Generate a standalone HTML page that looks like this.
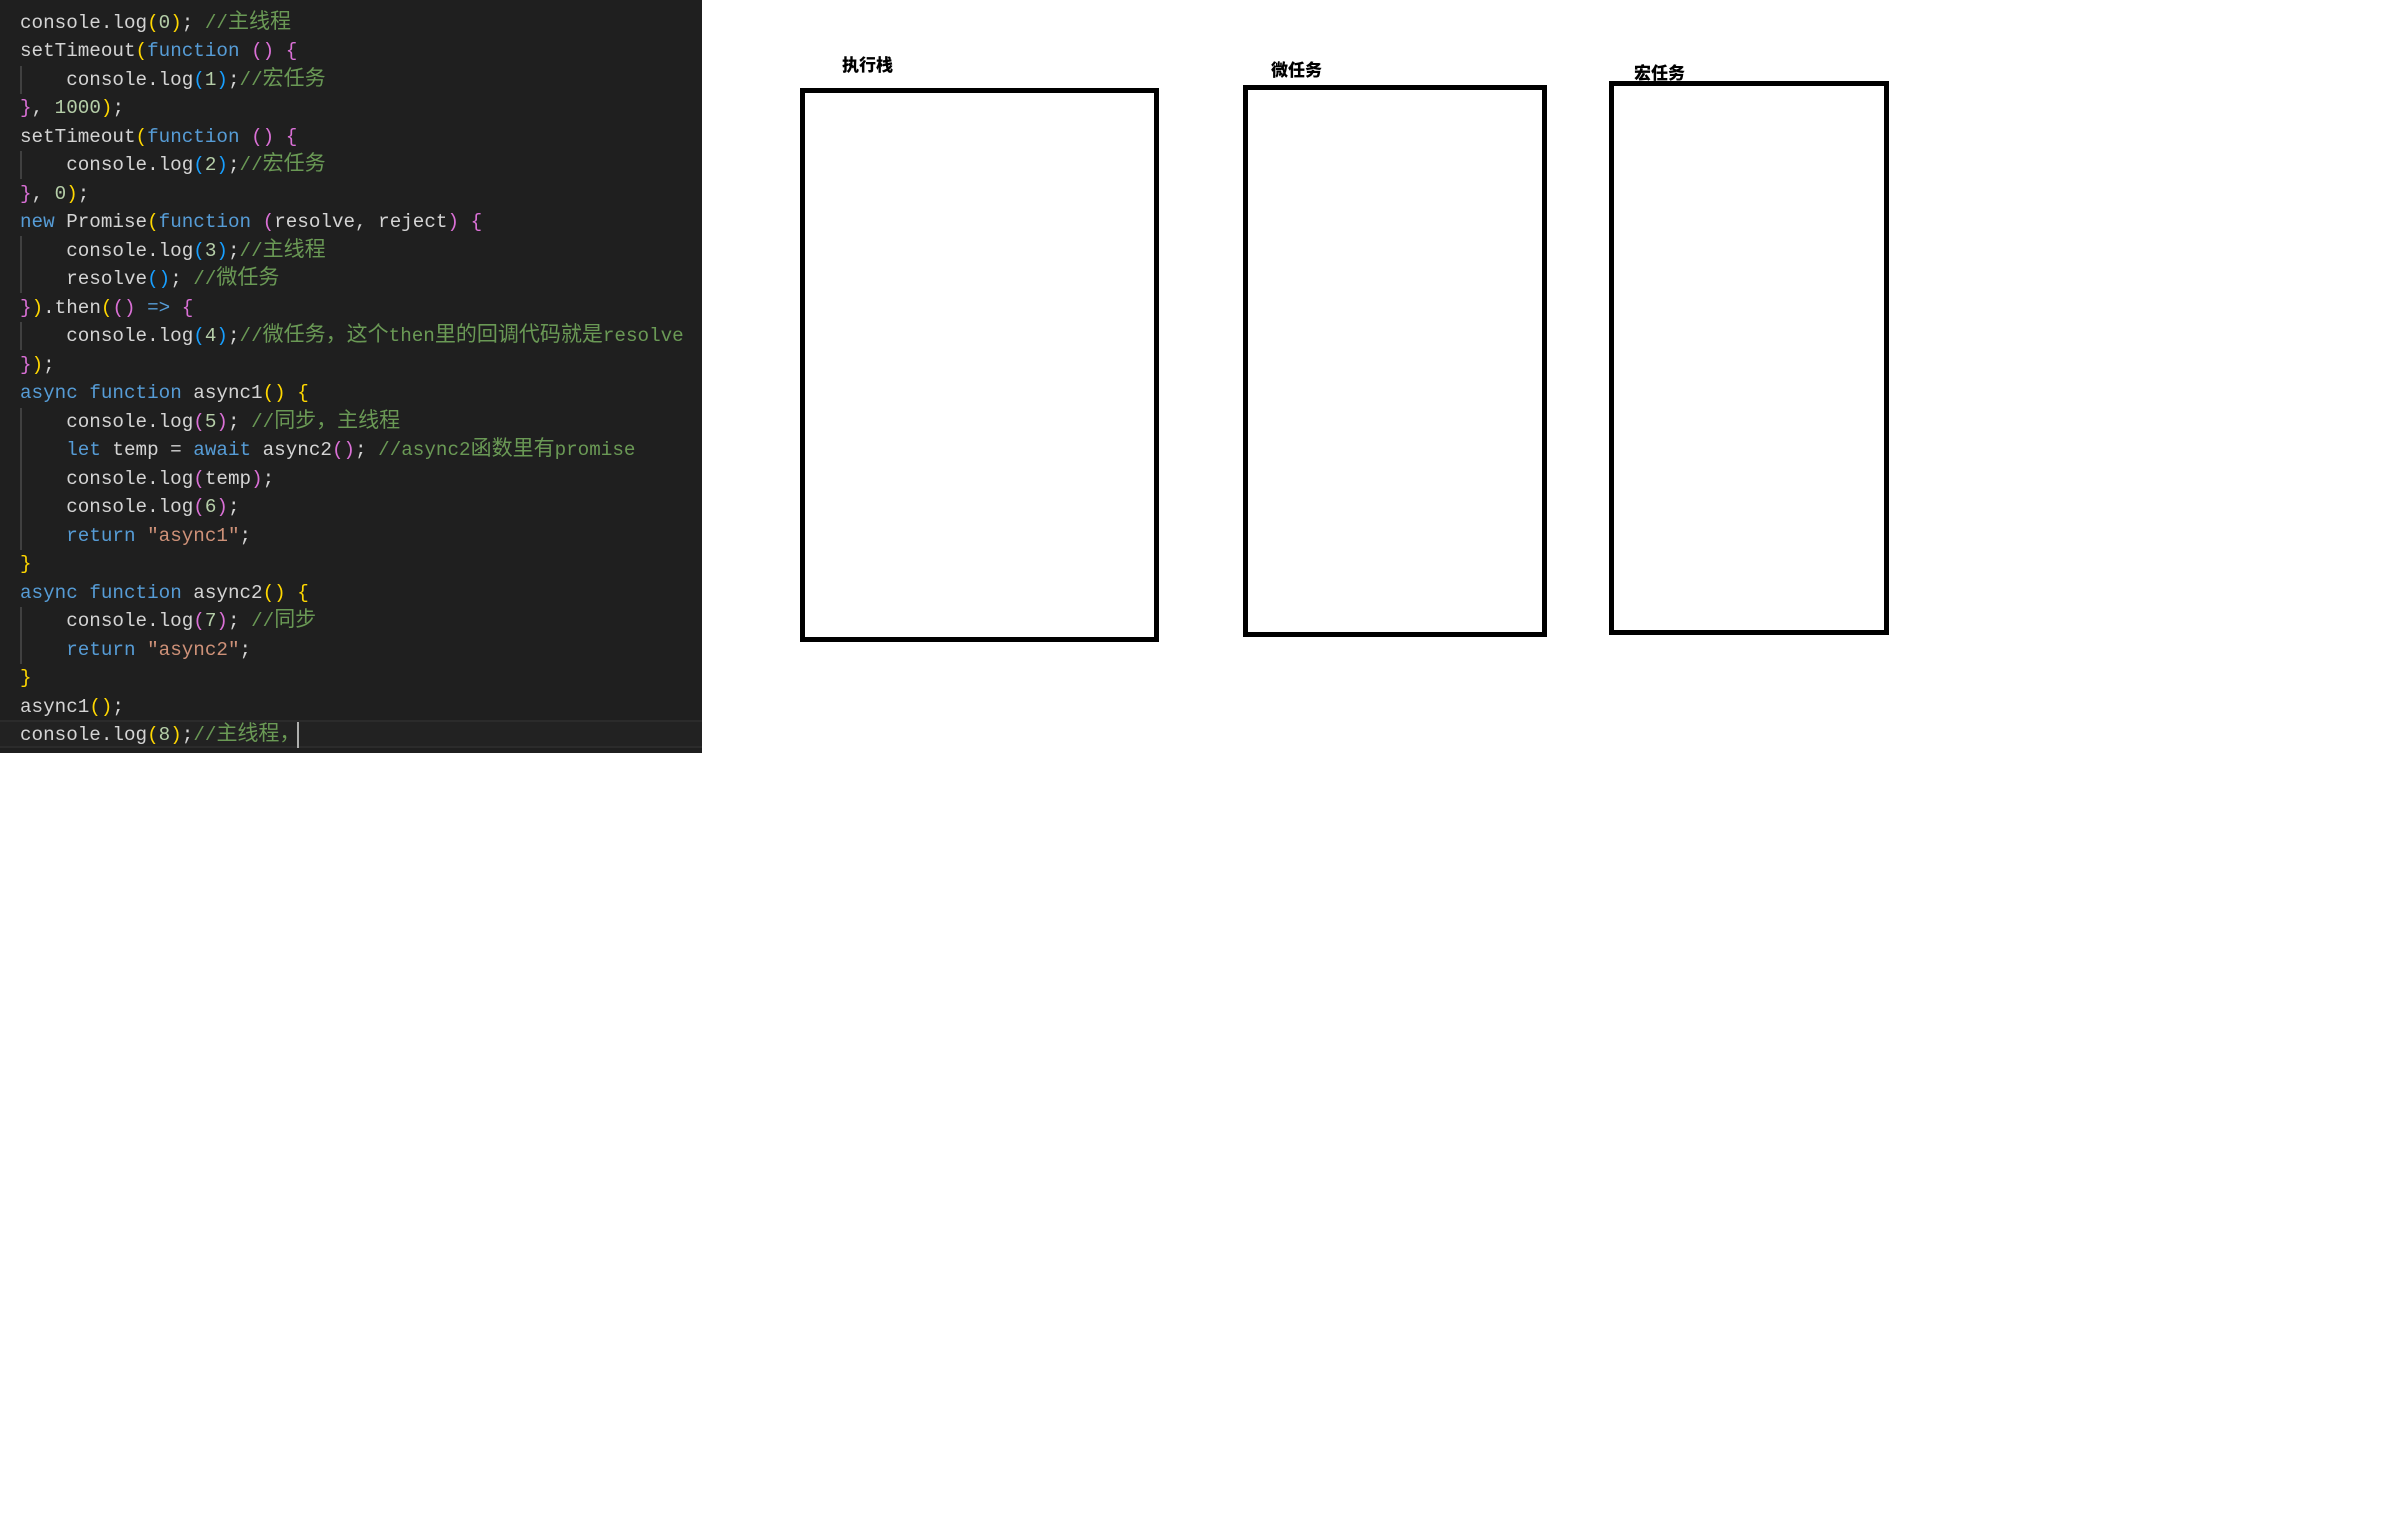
<!DOCTYPE html>
<html><head><meta charset="utf-8">
<style>
html,body{margin:0;padding:0;background:#fff;width:2394px;height:1530px;overflow:hidden;position:relative}
#code{position:absolute;left:0;top:0;width:702px;height:753px;background:#1f1f1f;}
.ln{position:absolute;left:20px;height:28.5px;line-height:28.5px;font-family:"Liberation Mono","Noto Sans CJK SC",monospace;font-size:19.25px;color:#d4d4d4;white-space:pre}
.c{color:#6a9955}
.c i{font-style:normal;font-size:21px}
.k{color:#569cd6}
.n{color:#b5cea8}
.s{color:#ce9178}
.y{color:#ffd700}.p{color:#da70d6}.b{color:#179fff}
.g{position:absolute;left:20px;width:2px;background:#404040}
#cur{position:absolute;left:0;top:720px;width:702px;height:28px;background:#222;border-top:2px solid #2b2b2b;border-bottom:2px solid #2b2b2b;box-sizing:border-box}
.box{position:absolute;border:5px solid #000;box-sizing:border-box}
.lab{position:absolute;font-family:"Noto Sans CJK SC",sans-serif;font-weight:900;font-size:17px;line-height:17px;color:#000}
</style></head><body>
<div id="code">
<div id="cur"></div>
<div class="g" style="top:66px;height:28px"></div>
<div class="g" style="top:151px;height:28px"></div>
<div class="g" style="top:236px;height:57px"></div>
<div class="g" style="top:322px;height:28px"></div>
<div class="g" style="top:408px;height:142px"></div>
<div class="g" style="top:607px;height:57px"></div>
<div class="ln" style="top:8.5px">console.log<span class="y">(</span><span class="n">0</span><span class="y">)</span>; <span class="c">//<i>主线程</i></span></div>
<div class="ln" style="top:37px">setTimeout<span class="y">(</span><span class="k">function</span> <span class="p">()</span> <span class="p">{</span></div>
<div class="ln" style="top:65.5px">    console.log<span class="b">(</span><span class="n">1</span><span class="b">)</span>;<span class="c">//<i>宏任务</i></span></div>
<div class="ln" style="top:94px"><span class="p">}</span>, <span class="n">1000</span><span class="y">)</span>;</div>
<div class="ln" style="top:122.5px">setTimeout<span class="y">(</span><span class="k">function</span> <span class="p">()</span> <span class="p">{</span></div>
<div class="ln" style="top:151px">    console.log<span class="b">(</span><span class="n">2</span><span class="b">)</span>;<span class="c">//<i>宏任务</i></span></div>
<div class="ln" style="top:179.5px"><span class="p">}</span>, <span class="n">0</span><span class="y">)</span>;</div>
<div class="ln" style="top:208px"><span class="k">new</span> Promise<span class="y">(</span><span class="k">function</span> <span class="p">(</span>resolve, reject<span class="p">)</span> <span class="p">{</span></div>
<div class="ln" style="top:236.5px">    console.log<span class="b">(</span><span class="n">3</span><span class="b">)</span>;<span class="c">//<i>主线程</i></span></div>
<div class="ln" style="top:265px">    resolve<span class="b">()</span>; <span class="c">//<i>微任务</i></span></div>
<div class="ln" style="top:293.5px"><span class="p">}</span><span class="y">)</span>.then<span class="y">(</span><span class="p">()</span> <span class="k">=&gt;</span> <span class="p">{</span></div>
<div class="ln" style="top:322px">    console.log<span class="b">(</span><span class="n">4</span><span class="b">)</span>;<span class="c">//<i>微任务，这个</i>then<i>里的回调代码就是</i>resolve</span></div>
<div class="ln" style="top:350.5px"><span class="p">}</span><span class="y">)</span>;</div>
<div class="ln" style="top:379px"><span class="k">async</span> <span class="k">function</span> async1<span class="y">()</span> <span class="y">{</span></div>
<div class="ln" style="top:407.5px">    console.log<span class="p">(</span><span class="n">5</span><span class="p">)</span>; <span class="c">//<i>同步，主线程</i></span></div>
<div class="ln" style="top:436px">    <span class="k">let</span> temp = <span class="k">await</span> async2<span class="p">()</span>; <span class="c">//async2<i>函数里有</i>promise</span></div>
<div class="ln" style="top:464.5px">    console.log<span class="p">(</span>temp<span class="p">)</span>;</div>
<div class="ln" style="top:493px">    console.log<span class="p">(</span><span class="n">6</span><span class="p">)</span>;</div>
<div class="ln" style="top:521.5px">    <span class="k">return</span> <span class="s">"async1"</span>;</div>
<div class="ln" style="top:550px"><span class="y">}</span></div>
<div class="ln" style="top:578.5px"><span class="k">async</span> <span class="k">function</span> async2<span class="y">()</span> <span class="y">{</span></div>
<div class="ln" style="top:607px">    console.log<span class="p">(</span><span class="n">7</span><span class="p">)</span>; <span class="c">//<i>同步</i></span></div>
<div class="ln" style="top:635.5px">    <span class="k">return</span> <span class="s">"async2"</span>;</div>
<div class="ln" style="top:664px"><span class="y">}</span></div>
<div class="ln" style="top:692.5px">async1<span class="y">()</span>;</div>
<div class="ln" style="top:721px">console.log<span class="y">(</span><span class="n">8</span><span class="y">)</span>;<span class="c">//<i>主线程，</i></span></div>
<div style="position:absolute;left:297px;top:722px;width:2px;height:26px;background:#aeafad"></div>
</div>
<div class="lab" style="left:842px;top:55px">执行栈</div>
<div class="lab" style="left:1271px;top:60px">微任务</div>
<div class="lab" style="left:1634px;top:63px">宏任务</div>
<div class="box" style="left:800px;top:88px;width:359px;height:554px"></div>
<div class="box" style="left:1243px;top:85px;width:304px;height:552px"></div>
<div class="box" style="left:1609px;top:81px;width:280px;height:554px"></div>
</body></html>
